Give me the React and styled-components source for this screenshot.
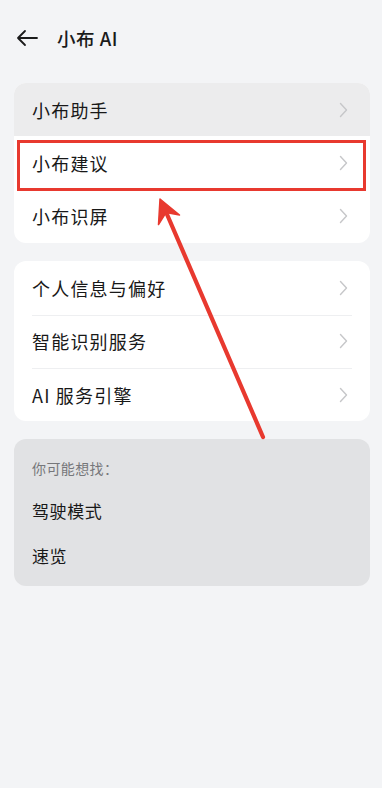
import React from "react";
import styled, { createGlobalStyle } from "styled-components";

const GlobalStyle = createGlobalStyle`
  html, body {
    margin: 0;
    padding: 0;
    background: #f3f4f6;
  }
  body {
    font-family: "Noto Sans CJK SC", "Noto Sans", sans-serif;
    color: #1b1b1b;
  }
`;

const mainGroup = [
    { label: "小布助手", pressed: true },
    { label: "小布建议", marked: true },
    { label: "小布识屏" },
];

const privacyGroup = [
    { label: "个人信息与偏好" },
    { label: "智能识别服务" },
    { label: "AI 服务引擎" },
];

const suggestions = ["驾驶模式", "速览"];

const Chevron = () => (
    <svg width="9" height="16" viewBox="0 0 9 16">
        <path d="M1.5 1.5 L7.5 8 L1.5 14.5" fill="none" stroke="#c6c7c9" strokeWidth="1.4"
              strokeLinecap="round" strokeLinejoin="round"/>
    </svg>
);

const BackArrow = () => (
    <svg width="22" height="18" viewBox="0 0 22 18">
        <path d="M2 9 H21 M9 2 L2 9 L9 16" fill="none" stroke="#1b1b1b" strokeWidth="1.8"
              strokeLinecap="round" strokeLinejoin="round"/>
    </svg>
);

const App = () => {
    return (
        <Page>
            <GlobalStyle/>
            <Header>
                <BackButton><BackArrow/></BackButton>
                <Title>小布 AI</Title>
            </Header>

            <Card>
                {mainGroup.map((item) => (
                    <Row key={item.label} pressed={item.pressed}>
                        <RowLabel>{item.label}</RowLabel>
                        <Chevron/>
                        {item.marked && <Marker/>}
                    </Row>
                ))}
            </Card>

            <Card>
                {privacyGroup.map((item, i) => (
                    <Row key={item.label} divider={i > 0}>
                        <RowLabel>{item.label}</RowLabel>
                        <Chevron/>
                    </Row>
                ))}
            </Card>

            <SuggestCard>
                <SuggestTitle>你可能想找：</SuggestTitle>
                {suggestions.map((s) => (
                    <SuggestItem key={s}>{s}</SuggestItem>
                ))}
            </SuggestCard>

            <Annotation viewBox="0 0 382 788">
                <line x1="263" y1="437" x2="166" y2="212" stroke="#e8392f" strokeWidth="4.2"
                      strokeLinecap="round"/>
                <polygon points="160,199 179.5,215 166,212.5 158.5,224.5" fill="#e8392f"
                         stroke="#e8392f" strokeWidth="1.5" strokeLinejoin="round"/>
            </Annotation>
        </Page>
    );
};

const Page = styled.div`
  position: relative;
  width: 382px;
  min-height: 788px;
  background: #f3f4f6;
  overflow: hidden;
`;

const Header = styled.div`
  height: 83px;
  display: flex;
  align-items: center;
  padding: 0 0 8px 16px;
  box-sizing: border-box;
`;

const BackButton = styled.div`
  width: 22px;
  height: 18px;
  display: flex;
  margin-right: 19px;
`;

const Title = styled.div`
  font-size: 18.5px;
  font-weight: 500;
  letter-spacing: 0.5px;
`;

const Card = styled.div`
  margin: 0 12px 18px 14px;
  background: #ffffff;
  border-radius: 12px;
  overflow: visible;
`;

const Row = styled.div.withConfig({
    shouldForwardProp: (p) => !["pressed", "divider"].includes(p),
})`
  position: relative;
  height: 53.4px;
  display: flex;
  align-items: center;
  justify-content: space-between;
  padding: 0 22px 0 18px;
  background: ${(p) => (p.pressed ? "#ececed" : "transparent")};
  border-radius: ${(p) => (p.pressed ? "12px 12px 0 0" : "0")};

  &::before {
    content: "";
    display: ${(p) => (p.divider ? "block" : "none")};
    position: absolute;
    top: 0;
    left: 18px;
    right: 18px;
    height: 1px;
    background: #eeeff1;
  }
`;

const RowLabel = styled.span`
  font-size: 18px;
  color: #181818;
  letter-spacing: 1.2px;
`;

const Marker = styled.div`
  position: absolute;
  left: 3px;
  right: 4px;
  top: 4px;
  bottom: -1px;
  border: 3.5px solid #e8392f;
  pointer-events: none;
`;

const SuggestCard = styled.div`
  margin: 0 12px 0 14px;
  background: #e1e2e4;
  border-radius: 12px;
  padding: 18px 18px 12px;
  height: 147px;
  box-sizing: border-box;
  display: flex;
  flex-direction: column;
`;

const SuggestTitle = styled.div`
  font-size: 14px;
  color: #76777a;
  height: 22px;
  line-height: 22px;
  margin-bottom: 20px;
  letter-spacing: 0.4px;
`;

const SuggestItem = styled.div`
  font-size: 17px;
  color: #181818;
  height: 24px;
  line-height: 24px;
  margin-bottom: 21px;
  letter-spacing: 0.6px;
`;

const Annotation = styled.svg`
  position: absolute;
  left: 0;
  top: 0;
  width: 382px;
  height: 788px;
  pointer-events: none;
`;

export default App;
